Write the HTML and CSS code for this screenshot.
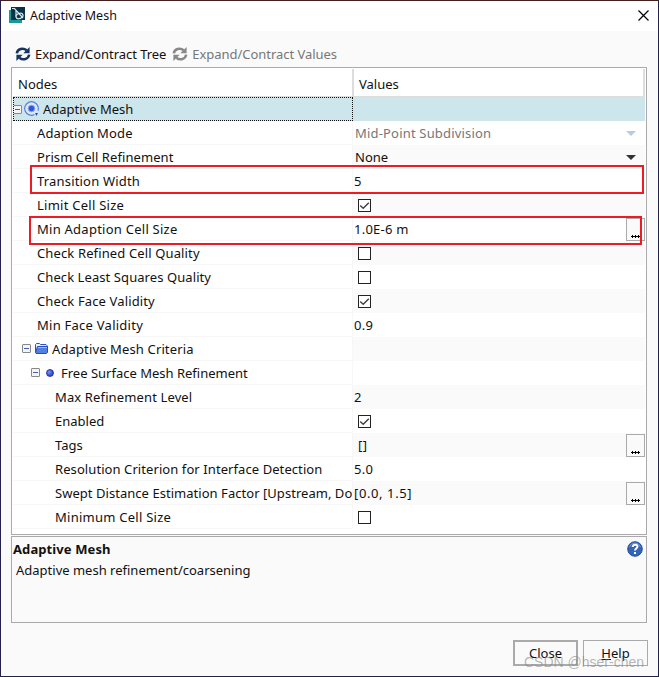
FILE: index.html
```html
<!DOCTYPE html>
<html lang="en">
<head>
<meta charset="utf-8">
<title>Adaptive Mesh</title>
<link rel="stylesheet" href="styles.css">
</head>
<body>
<svg class="defs" width="0" height="0">
  <symbol id="sync" viewBox="0 0 16 14">
    <path d="M1.800 6.300C2.400 2 8 .3 11.600 3.300M14.200 7.700C13.600 12 8 13.700 4.400 10.700" fill="none" stroke="currentColor" stroke-width="2.500"/>
    <path d="M14.600 0v6.200H8.300zM1.400 14V7.800h6.300z" fill="currentColor"/>
  </symbol>
  <symbol id="check" viewBox="0 0 11 11"><path d="M1.200 5.500l3 2.700L9.800 2.800" fill="none" stroke="#444" stroke-width="1.500"/></symbol>
  <symbol id="dots" viewBox="0 0 9 3"><path d="M0 1.500h9" stroke="#000"/><path d="M1.500 0v3M4.500 0v3M7.500 0v3" stroke="#000"/></symbol>
</svg>
<div class="window">
  <header class="titlebar">
    <svg class="logo" width="16" height="16" viewBox="0 0 16 16"><path d="M0 3h13v13H0z" fill="#159a98"/><path d="M2 0h14v13H2z" fill="#053449"/><path d="M3 1.500h2.500L14 11M7 3v6.500" fill="none" stroke="#dce7ec" stroke-width="1.200"/><ellipse cx="10.500" cy="9" rx="3.600" ry="2.500" transform="rotate(-20 10.500 9)" fill="none" stroke="#dce7ec" stroke-width="1.200"/></svg>
    <h1>Adaptive Mesh</h1>
    <svg class="close" width="11" height="11" viewBox="0 0 11 11"><path d="M.5.5l10 10M10.500.5l-10 10" stroke="#000" stroke-width="1.200"/></svg>
  </header>
  <div class="toolbar">
    <svg class="tree-sync" width="16" height="14"><use href="#sync"/></svg><span class="t-tree">Expand/Contract Tree</span>
    <svg class="value-sync" width="16" height="14"><use href="#sync"/></svg><span class="t-values">Expand/Contract Values</span>
  </div>
  <main class="table">
    <div class="head"><div class="node">Nodes</div><div class="val">Values</div></div>
    <div class="row selected"><div class="node"><i class="toggle"></i><svg class="mesh" width="16" height="16" viewBox="0 0 16 16"><circle cx="7.500" cy="7.500" r="6.800" fill="#dbe8fa" stroke="#5f80d8" stroke-width="1.200" stroke-dasharray="37 6" transform="rotate(65 7.500 7.500)"/><circle cx="7.500" cy="7.500" r="3.300" fill="#3158d4" stroke="#8fa8ed"/><path d="M11 12h3l-1.500 3z" fill="#244bc2"/></svg>Adaptive Mesh</div><div class="val"></div></div>
    <div class="row"><div class="node l1 s2">Adaption Mode</div><div class="val off pad s3">Mid-Point Subdivision<i class="arrow"></i></div></div>
    <div class="row"><div class="node l1 s1">Prism Cell Refinement</div><div class="val pad">None<i class="arrow"></i></div></div>
    <div class="row"><div class="node l1 s3">Transition Width</div><div class="val">5</div></div>
    <div class="row"><div class="node l1 s4">Limit Cell Size</div><div class="val"><i class="box"><svg width="11" height="11"><use href="#check"/></svg></i></div></div>
    <div class="row"><div class="node l1 s4">Min Adaption Cell Size</div><div class="val s4">1.0E-6 m<i class="more"><svg width="9" height="3"><use href="#dots"/></svg></i></div></div>
    <div class="row"><div class="node l1 s2">Check Refined Cell Quality</div><div class="val"><i class="box"></i></div></div>
    <div class="row"><div class="node l1 s1">Check Least Squares Quality</div><div class="val"><i class="box"></i></div></div>
    <div class="row"><div class="node l1 s2">Check Face Validity</div><div class="val"><i class="box"><svg width="11" height="11"><use href="#check"/></svg></i></div></div>
    <div class="row"><div class="node l1 s4">Min Face Validity</div><div class="val s4">0.9</div></div>
    <div class="row"><div class="node criteria s2"><i class="toggle"></i><svg class="folder" width="13" height="11" viewBox="0 0 13 11"><path d="M.5 9.500V1.500l1-1h3l1 1H11l1 1V4" fill="#e8efff" stroke="#2a56bd"/><path d="M2.500 3.500h10v6l-1 1H1l-.5-1z" fill="#527fe0" stroke="#244fc0"/><path d="M3 4.500h9" stroke="#9dbcff"/></svg>Adaptive Mesh Criteria</div><div class="val"></div></div>
    <div class="row"><div class="node surface"><i class="toggle"></i><i class="dot"></i>Free Surface Mesh Refinement</div><div class="val"></div></div>
    <div class="row"><div class="node l2 s2">Max Refinement Level</div><div class="val">2</div></div>
    <div class="row"><div class="node l2">Enabled</div><div class="val"><i class="box"><svg width="11" height="11"><use href="#check"/></svg></i></div></div>
    <div class="row"><div class="node l2">Tags</div><div class="val tags">[]<i class="more"><svg width="9" height="3"><use href="#dots"/></svg></i></div></div>
    <div class="row"><div class="node l2 s1">Resolution Criterion for Interface Detection</div><div class="val s4">5.0</div></div>
    <div class="row"><div class="node l2 swept">Swept Distance Estimation Factor [Upstream, Do</div><div class="val s5">[0.0, 1.5]<i class="more"><svg width="9" height="3"><use href="#dots"/></svg></i></div></div>
    <div class="row"><div class="node l2 s4">Minimum Cell Size</div><div class="val"><i class="box"></i></div></div>
    <div class="mark width-mark"></div><div class="mark size-mark"></div>
  </main>
  <section class="description">
    <h2>Adaptive Mesh</h2><p>Adaptive mesh refinement/coarsening</p>
    <svg class="help" width="16" height="16" viewBox="0 0 16 16"><circle cx="8" cy="8" r="7.300" fill="#3464b5" stroke="#2450a0"/><path d="M2.500 6a5.800 5.800 0 0 1 11 0" fill="none" stroke="#7797d0"/><path d="M5.700 6c0-3 4.800-3 4.800-.4C10.500 7.500 8 7.300 8 9.600M8 11v2" fill="none" stroke="#fff" stroke-width="2"/></svg>
  </section>
  <footer><button class="primary">Close</button><button><span class="key">H</span>elp</button></footer>
  <div class="watermark">CSDN @hser-chen</div>
</div>
</body>
</html>
```
FILE: styles.css
```css
* { box-sizing: border-box; }
body { margin: 0; font: 13px/24px "Noto Sans", sans-serif; color: #111; }
h1, h2, p { margin: 0; font-size: inherit; font-weight: 400; }
svg { display: block; flex: none; }
i { display: block; flex: none; }
.defs { position: absolute; }
.window { position: relative; width: 659px; height: 677px; overflow: hidden; background: #fafafa; border: 1px solid #24204c; border-top-color: #43201f; }
.titlebar { height: 30px; display: flex; align-items: center; padding: 0 9px 2px 8px; background: #fff; }
.titlebar h1 { margin-left: 5px; padding-top: 2px; font-size: 12.5px; }
.close { margin-left: auto; }
.toolbar { height: 36px; padding: 9px 0 0 14px; display: flex; align-items: center; white-space: nowrap; letter-spacing: -0.04px; }
.tree-sync { color: #16345f; }
.value-sync { color: #888; margin-left: 6px; }
.toolbar span { margin-left: 4px; }
.toolbar .t-values { color: #777; }
.table { position: relative; width: 636px; height: 468px; margin-left: 10px; padding: 1px 1px 0; background: #fff; border: 1px solid #aaa; }
.head, .row { display: grid; grid-template-columns: 340px 292px; white-space: nowrap; }
.head { height: 28px; line-height: 31px; border-bottom: 1px solid #ddd; }
.head .node { padding-left: 5px; border-right: 1px solid #ddd; }
.head .val { padding-left: 5px; border-left: 1px solid #ddd; border-right: 2px solid #ddd; }
.row { height: 24px; }
.row .node { height: 24px; overflow: hidden; border-bottom: 1px solid #f7f7f7; border-right: 1px solid #f7f7f7; display: flex; align-items: center; }
.row .val { display: flex; align-items: center; padding-left: 1px; }
.row:nth-child(even) .val { background: #fafafa; }
.row.selected .node { border: 1px dotted #111; background: #cde6eb; }
.row.selected .val { background: #cde6eb; }
.row .l1 { padding-left: 24px; }
.row .l2 { padding-left: 42px; }
.row .criteria { padding-left: 9px; }
.row .surface { padding-left: 18px; }
.s1 { letter-spacing: 0.08px; }
.s2 { letter-spacing: 0.13px; }
.s3 { letter-spacing: 0.18px; }
.s4 { letter-spacing: 0.25px; }
.s5 { letter-spacing: 0.6px; }
.swept { letter-spacing: 0.04px; }
.toggle { width: 9px; height: 9px; border: 1px solid #888; border-radius: 1px; background: linear-gradient(#3d64b4, #3d64b4) center / 5px 1px no-repeat, #f4f4f4; }
.selected .toggle { margin-left: -1px; }
.mesh { margin: 0 3px 0 2px; }
.folder { margin: 0 4px; }
.dot { width: 8px; height: 8px; margin: 0 7px 0 6px; border-radius: 50%; border: 1px solid #2637a3; background: radial-gradient(circle at 35% 35%, #7993f7, #2e43c6 70%); }
.row .pad { padding-left: 2px; }
.row .tags { padding-left: 5px; letter-spacing: 0.5px; }
.off { color: #777; }
.arrow { margin: 1px 9px 0 auto; border: 5px solid transparent; border-top-color: #333; border-bottom: 0; }
.off .arrow { border-top-color: #b4cce8; }
.box { width: 13px; height: 13px; margin-left: 4px; border: 1px solid #222; background: #fff; }
.more { width: 19px; height: 23px; margin-left: auto; padding: 16px 0 0 4px; border: 1px solid #aaa; background: #fafafa; }
.mark { position: absolute; border: 2px solid #ed1c24; }
.width-mark { left: 18px; top: 97px; width: 614px; height: 29px; }
.size-mark { left: 17px; top: 148px; width: 613px; height: 29px; }
.description { position: relative; width: 636px; height: 87px; margin: 1px 0 0 10px; border: 1px solid #aaa; }
.description h2 { font-weight: 700; margin-left: 1px; line-height: 24px; letter-spacing: 0.1px; }
.description p { margin-left: 4px; line-height: 18px; }
.help { position: absolute; right: 3px; top: 4px; }
footer { height: 53px; padding: 17px 10px 0 0; display: flex; justify-content: flex-end; gap: 5px; }
button { width: 65px; height: 26px; padding: 0; border: 1px solid #aaa; background: #fafafa; font: 13px/22px "Noto Sans", sans-serif; color: #111; }
.primary { border-width: 2px; }
.key { text-decoration: underline; }
.watermark { position: absolute; left: 523px; top: 652px; font: 14px/18px "Liberation Sans", sans-serif; color: #8889; white-space: nowrap; }
```
